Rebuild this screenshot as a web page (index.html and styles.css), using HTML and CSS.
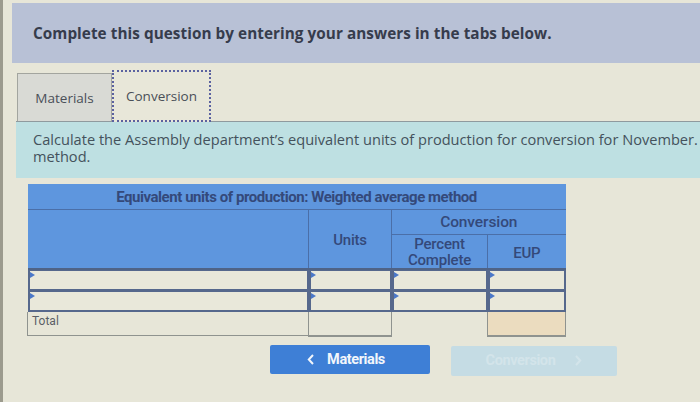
FILE: index.html
```html
<!DOCTYPE html>
<html>
<head>
<meta charset="utf-8">
<link rel="stylesheet" href="styles.css">
</head>
<body>
<div class="page">
  <div class="banner">Complete this question by entering your answers in the tabs below.</div>
  <div class="tabs">
    <div class="tab">Materials</div>
    <div class="tab active">Conversion</div>
  </div>
  <div class="prompt">Calculate the Assembly department’s equivalent units of production for conversion for November. Use the weighted average method.</div>
  <table class="grid">
    <colgroup>
      <col class="c1"><col class="c2"><col class="c3"><col class="c4">
    </colgroup>
    <tr class="title"><th colspan="4">Equivalent units of production: Weighted average method</th></tr>
    <tr class="h1">
      <th rowspan="2" class="blank"></th>
      <th rowspan="2" class="units">Units</th>
      <th colspan="2" class="conv">Conversion</th>
    </tr>
    <tr class="h2">
      <th class="pct">Percent<br>Complete</th>
      <th class="eup">EUP</th>
    </tr>
    <tr class="data">
      <td><div class="inp"></div></td>
      <td><div class="inp"></div></td>
      <td><div class="inp"></div></td>
      <td><div class="inp"></div></td>
    </tr>
    <tr class="data">
      <td><div class="inp"></div></td>
      <td><div class="inp"></div></td>
      <td><div class="inp"></div></td>
      <td><div class="inp"></div></td>
    </tr>
    <tr class="total">
      <td class="lbl">Total</td>
      <td class="tbox"></td>
      <td class="none"></td>
      <td class="tan"></td>
    </tr>
  </table>
  <div class="nav">
    <button class="btn prev"><svg class="chev" width="7" height="11" viewBox="0 0 7 11"><path d="M6 1 L1.8 5.5 L6 10" fill="none" stroke="currentColor" stroke-width="2"/></svg>Materials</button>
    <button class="btn next">Conversion<svg class="chev" width="7" height="11" viewBox="0 0 7 11"><path d="M1 1 L5.2 5.5 L1 10" fill="none" stroke="currentColor" stroke-width="2"/></svg></button>
  </div>
</div>
</body>
</html>
```

FILE: styles.css
```css
html, body {
  margin: 0;
  padding: 0;
  background: #e7e6d8;
  overflow: hidden;
}
body {
  width: 700px;
  height: 402px;
  border-left: 3px solid #9c9b8e;
  box-sizing: border-box;
}
.page {
  padding-top: 3px;
  padding-left: 9px;
  font-family: "Open Sans", "DejaVu Sans", sans-serif;
}
.banner {
  height: 60px;
  box-sizing: border-box;
  background: #b8c1d6;
  padding: 20px 0 0 21px;
  font-weight: bold;
  font-size: 15.3px;
  letter-spacing: 0.05px;
  color: #363c4c;
  white-space: nowrap;
  overflow: hidden;
}
.tabs {
  display: flex;
  align-items: flex-end;
  margin-top: 7px;
  padding-left: 1px;
  height: 51px;
  border-bottom: 1px solid #8f9a9e;
  margin-left: 4px;
}
.tab {
  box-sizing: border-box;
  height: 48px;
  width: 95px;
  background: #d9dad5;
  border: 1px solid #a3a59f;
  border-bottom: none;
  display: flex;
  align-items: center;
  justify-content: center;
  font-size: 13.5px;
  color: #4a4f58;
}
.tab.active {
  height: 52px;
  width: 99px;
  margin-bottom: -1px;
  background: #e8e7d9;
  border: 2px dotted #5b62a0;
  color: #4a4f58;
}
.prompt {
  margin-left: 4px;
  height: 56px;
  box-sizing: border-box;
  background: #bee0e2;
  padding: 9px 0 0 17px;
  font-size: 14.6px;
  line-height: 17px;
  color: #44525c;
  width: 880px;
}
.grid {
  margin: 6px 0 0 15px;
  border-collapse: collapse;
  width: 538px;
  table-layout: fixed;
  font-family: Roboto, "Liberation Sans", sans-serif;
}
.c1 { width: 281px; }
.c2 { width: 83px; }
.c3 { width: 96px; }
.c4 { width: 78px; }
.grid th {
  background: #5e96de;
  color: #34497a;
  font-weight: bold;
  font-size: 15px;
  letter-spacing: -0.45px;
  padding: 0;
}
.title th {
  height: 25px;
  text-align: center;
  border-bottom: 1px solid #4b6fa8;
}
.h1 th {
  border-left: 1px solid #4b6fa8;
  border-bottom: 2px solid #4f6386;
}
.h1 th.blank { border-left: none; }
.h1 th.units {
  vertical-align: top;
  padding-top: 21px;
  font-weight: 500;
  font-size: 15px;
  letter-spacing: -0.2px;
}
.h1 th.conv {
  height: 24px;
  border-bottom: 1px solid #4b6fa8;
  font-weight: 500;
  font-size: 15.5px;
  letter-spacing: -0.1px;
}
.h2 th {
  height: 31px;
  border-left: 1px solid #4b6fa8;
  border-bottom: 2px solid #4f6386;
  font-weight: 500;
  font-size: 15px;
  letter-spacing: -0.2px;
  line-height: 16px;
}
.h2 th.eup { padding-top: 2px; }
.data td {
  height: 21px;
  padding: 0;
}
.inp {
  height: 21px;
  box-sizing: border-box;
  background: #e9e8da;
  border: 2px solid #56688c;
  border-top: 1px solid #56688c;
  position: relative;
}
.inp::before {
  content: "";
  position: absolute;
  left: 0;
  top: 1px;
  border-left: 5px solid #4b78c8;
  border-top: 3px solid transparent;
  border-bottom: 3px solid transparent;
}
.total td {
  height: 21px;
  padding: 0;
  font-size: 12px;
  color: #5a5f66;
}
.total .lbl {
  border-left: 1px solid #8f938f;
  border-bottom: 1px solid #8f938f;
  padding-left: 4px;
  vertical-align: top;
  padding-top: 2px;
}
.total .tbox {
  border: 1px solid #8f938f;
  border-bottom: 2px solid #8f938f;
  border-top: none;
}
.total .tan {
  background: #ebdcbf;
  border: 1px solid #8f938f;
  border-top: none;
  border-bottom: 2px solid #8f938f;
}
.nav {
  display: flex;
  gap: 21px;
  margin: 8px 0 0 258px;
}
.btn {
  width: 160px;
  height: 29px;
  border: none;
  border-radius: 2px;
  font-family: Roboto, "Liberation Sans", sans-serif;
  font-weight: bold;
  font-size: 14.5px;
  letter-spacing: -0.4px;
  padding: 0;
  display: flex;
  align-items: center;
  justify-content: center;
}
.btn.prev {
  background: #3e7fd6;
  color: #f2f6fb;
  padding-right: 8px;
}
.btn.next {
  width: 166px;
  height: 30px;
  margin-top: 1px;
  background: #c5dce4;
  color: #d3e4ea;
}
.btn.prev .chev { margin-right: 13px; }
.btn.next .chev { margin-left: 20px; }
```
